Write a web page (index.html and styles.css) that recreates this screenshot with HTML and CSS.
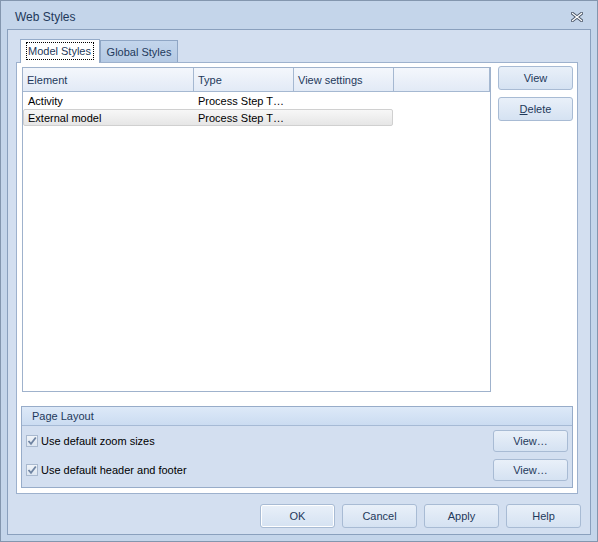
FILE: index.html
```html
<!DOCTYPE html>
<html>
<head>
<meta charset="utf-8">
<title>Web Styles</title>
<link rel="stylesheet" href="styles.css">
</head>
<body>
<div class="window">
  <div class="titlebar">
    <span class="title">Web Styles</span>
    <span class="close">
      <svg width="12" height="10" viewBox="0 0 12 10">
        <path d="M1.5 1.5 L10.5 8.5 M10.5 1.5 L1.5 8.5" stroke="#4a5668" stroke-width="3.2" stroke-linecap="square" fill="none"/>
        <path d="M1.5 1.5 L10.5 8.5 M10.5 1.5 L1.5 8.5" stroke="#ffffff" stroke-width="1.3" stroke-linecap="square" fill="none"/>
      </svg>
    </span>
  </div>
  <div class="frame">
    <div class="tabs">
      <div class="tab active"><span class="focus">Model Styles</span></div>
      <div class="tab">Global Styles</div>
    </div>
    <div class="page">
      <div class="top">
        <div class="list">
          <div class="hdr">
            <div class="hc w1">Element</div>
            <div class="hc w2">Type</div>
            <div class="hc w3">View settings</div>
            <div class="hc w4"></div>
          </div>
          <div class="row">
            <div class="cell w1">Activity</div>
            <div class="cell w2">Process Step T…</div>
          </div>
          <div class="row sel">
            <div class="cell w1">External model</div>
            <div class="cell w2">Process Step T…</div>
          </div>
        </div>
        <div class="side">
          <button class="btn side-btn">View</button>
          <button class="btn side-btn"><u>D</u>elete</button>
        </div>
      </div>
      <div class="group">
        <div class="ghead">Page Layout</div>
        <div class="gbody">
          <div class="opt">
            <span class="chk"><svg width="10" height="10" viewBox="0 0 10 10"><path d="M1.5 5 L4 7.8 L8.8 1.5" stroke="#6f84a2" stroke-width="1.8" fill="none"/></svg></span>
            <span class="lbl">Use default zoom sizes</span>
            <button class="btn opt-btn">View…</button>
          </div>
          <div class="opt">
            <span class="chk"><svg width="10" height="10" viewBox="0 0 10 10"><path d="M1.5 5 L4 7.8 L8.8 1.5" stroke="#6f84a2" stroke-width="1.8" fill="none"/></svg></span>
            <span class="lbl">Use default header and footer</span>
            <button class="btn opt-btn">View…</button>
          </div>
        </div>
      </div>
    </div>
    <div class="footer">
      <button class="btn foot-btn default">OK</button>
      <button class="btn foot-btn">Cancel</button>
      <button class="btn foot-btn">Apply</button>
      <button class="btn foot-btn">Help</button>
    </div>
  </div>
</div>
</body>
</html>
```
FILE: styles.css
```css
* { box-sizing: border-box; }
html, body { margin: 0; padding: 0; }
body {
  font-family: "Liberation Sans", Arial, sans-serif;
  font-size: 11px;
  color: #1e395b;
  background: #c4d5ea;
}
.window {
  width: 598px;
  height: 542px;
  border: 1px solid #8396ae;
  background: #c4d5ea;
  display: flex;
  flex-direction: column;
}
.titlebar {
  height: 28px;
  display: flex;
  align-items: center;
  padding: 0 14px 0 14px;
}
.title {
  font-size: 12px;
  color: #1e395b;
  margin-top: 4px;
}
.close {
  margin-left: auto;
  display: flex;
  margin-top: 4px;
}
.frame {
  flex: 1;
  margin: 0 6px 6px 6px;
  border: 1px solid #8aa0bd;
  background: #d3dff0;
  padding: 9px 0 0 8px;
  display: flex;
  flex-direction: column;
}
.tabs {
  height: 23px;
  display: flex;
  align-items: flex-end;
  padding-left: 4px;
  position: relative;
  z-index: 1;
}
.tab {
  height: 22px;
  width: 78px;
  border: 1px solid #8fa6c5;
  border-bottom: none;
  background: linear-gradient(#c3d5ec, #b5cae4);
  display: flex;
  align-items: center;
  justify-content: center;
  color: #1e395b;
  padding-top: 1px;
}
.tab.active {
  height: 24px;
  width: 80px;
  margin-bottom: -1px;
  background: #ffffff;
  border-color: #95abc9;
  padding-top: 0;
  padding-bottom: 2px;
}
.focus {
  outline: 1px dotted #000;
  outline-offset: 0;
  padding: 1px 2px 1px 1px;
  line-height: 14px;
}
.page {
  width: 562px;
  height: 432px;
  border: 1px solid #9db1cd;
  background: #ffffff;
  padding: 4px;
  display: flex;
  flex-direction: column;
}
.top {
  display: flex;
  padding-left: 1px;
  gap: 7px;
}
.list {
  width: 469px;
  height: 325px;
  border: 1px solid #9fb2cc;
  background: #fff;
}
.hdr {
  height: 24px;
  display: flex;
  background: linear-gradient(#f4f7fc, #e2eaf6);
  border-bottom: 1px solid #a5b8d1;
}
.hc {
  border-right: 1px solid #a5b8d1;
  display: flex;
  align-items: center;
  padding-left: 4px;
  color: #1e395b;
}
.w1 { width: 171px; }
.w2 { width: 100px; }
.w3 { width: 100px; }
.w4 { width: 96px; }
.row {
  height: 17px;
  width: 370px;
  display: flex;
  align-items: center;
  color: #000;
}
.row .cell { padding-left: 5px; }
.row .cell.w2 { padding-left: 4px; }
.row.sel {
  border: 1px solid #d0d0d0;
  border-radius: 2px;
  background: linear-gradient(#f7f7f7, #e6e6e6);
}
.row.sel .cell.w1 { padding-left: 4px; }
.row.sel .cell.w2 { padding-left: 3px; }
.side {
  display: flex;
  flex-direction: column;
  gap: 7px;
  margin-top: -1px;
}
.btn {
  font-family: "Liberation Sans", Arial, sans-serif;
  font-size: 11px;
  color: #1e395b;
  border: 1px solid #a8bbd4;
  border-radius: 3px;
  background: linear-gradient(#e9f0f9, #d5e2f2);
  padding: 0;
  margin: 0;
}
.side-btn { width: 75px; height: 24px; }
.group {
  margin-top: 14px;
  height: 82px;
  border: 1px solid #97acc9;
  background: #d3dff0;
}
.ghead {
  height: 19px;
  border-bottom: 1px solid #a6bad5;
  background: linear-gradient(#dde9f8, #cbdcf1);
  display: flex;
  align-items: center;
  padding-left: 10px;
  color: #1e395b;
}
.gbody {
  padding: 4px 4px 0 4px;
  display: flex;
  flex-direction: column;
  gap: 7px;
}
.opt {
  height: 22px;
  display: flex;
  align-items: center;
}
.chk {
  width: 12px;
  height: 12px;
  border: 1px solid #a9b9cf;
  background: linear-gradient(#f0f4f9, #dde6f1);
  display: flex;
  align-items: center;
  justify-content: center;
  margin-right: 3px;
}
.lbl { color: #000; }
.opt-btn {
  margin-left: auto;
  width: 75px;
  height: 22px;
}
.footer {
  display: flex;
  justify-content: flex-end;
  gap: 7px;
  margin-top: 10px;
  padding-right: 9px;
}
.foot-btn { width: 75px; height: 24px; }
.foot-btn.default {
  box-shadow: inset 0 0 0 1px #ffffff;
}
```
